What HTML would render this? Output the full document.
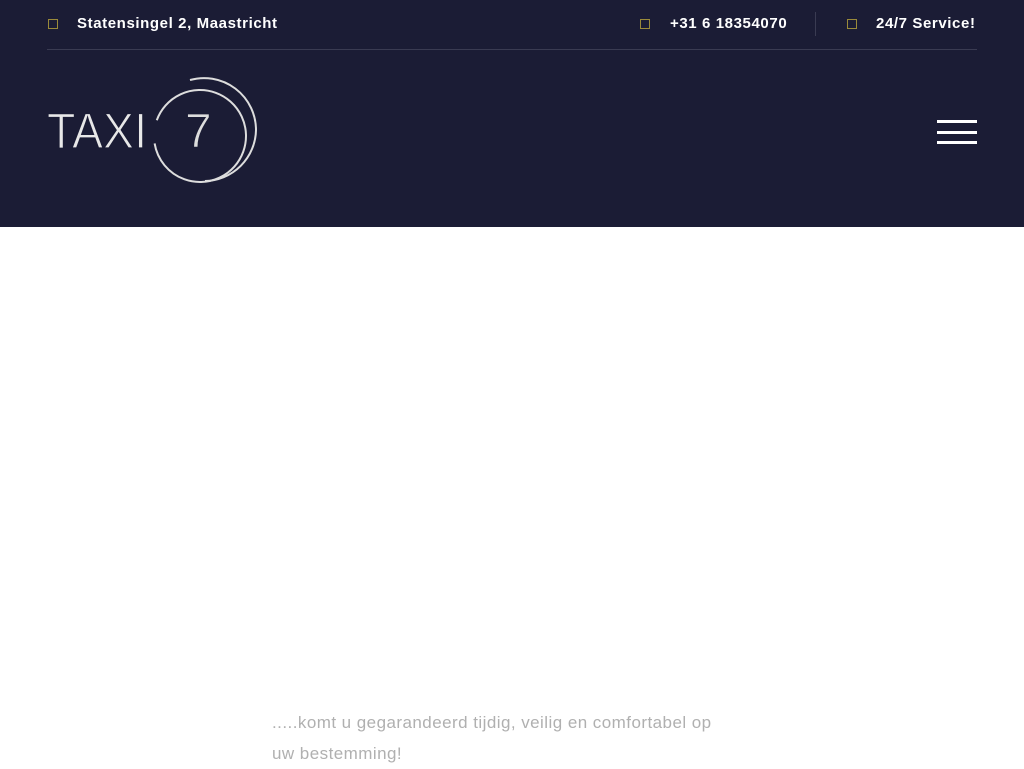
<!DOCTYPE html>
<html><head><style>
body{margin:0;width:1024px;height:768px;overflow:hidden;background:#fff;font-family:"Liberation Sans",sans-serif;}
.hdr{position:absolute;left:0;top:0;width:1024px;height:227px;background:#1b1c35;}
.top{position:absolute;left:47px;right:47px;top:0;height:49px;border-bottom:1px solid #3a3b52;color:#fff;font-size:15px;}
.sq{position:absolute;width:8px;height:8px;border:1.5px solid #9a8a3a;top:19px;}
.t{position:absolute;top:15px;font-weight:bold;letter-spacing:0.6px;white-space:nowrap;}
.sep{position:absolute;left:768px;top:12px;width:1px;height:24px;background:#3a3b52;}
.burger span{position:absolute;left:937px;width:40px;height:3px;background:#fff;}
.txt{position:absolute;left:272px;top:707px;width:460px;color:#b0b0b0;font-size:17px;line-height:31px;letter-spacing:0.45px;}
</style></head><body>
<div class="hdr">
<div class="top">
<div class="sq" style="left:1px"></div><div class="t" style="left:30px">Statensingel 2, Maastricht</div>
<div class="sq" style="left:593px"></div><div class="t" style="left:623px">+31 6 18354070</div>
<div class="sep"></div>
<div class="sq" style="left:800px"></div><div class="t" style="left:829px">24/7 Service!</div>
</div>
<svg style="position:absolute;left:0;top:0" width="300" height="227">
<text x="47" y="148" fill="#e8e8e8" font-family="Liberation Sans" font-size="50" textLength="100" lengthAdjust="spacingAndGlyphs" stroke="#1b1c35" stroke-width="1.2">TAXI</text>
<circle cx="200" cy="136" r="46" fill="none" stroke="#ddd" stroke-width="2" stroke-dasharray="265 24" transform="rotate(200 200 136)"/>
<path d="M190 80 A52 52 0 0 1 256 130 A52 52 0 0 1 205 181" fill="none" stroke="#ddd" stroke-width="2"/>
<text x="185" y="147" fill="#ddd" font-family="Liberation Sans" font-size="48" stroke="#1b1c35" stroke-width="1">7</text>
</svg>
<div class="burger"><span style="top:120px"></span><span style="top:131px"></span><span style="top:141px"></span></div>
</div>
<div class="txt">.....komt u gegarandeerd tijdig, veilig en comfortabel op uw bestemming!</div>
</body></html>
